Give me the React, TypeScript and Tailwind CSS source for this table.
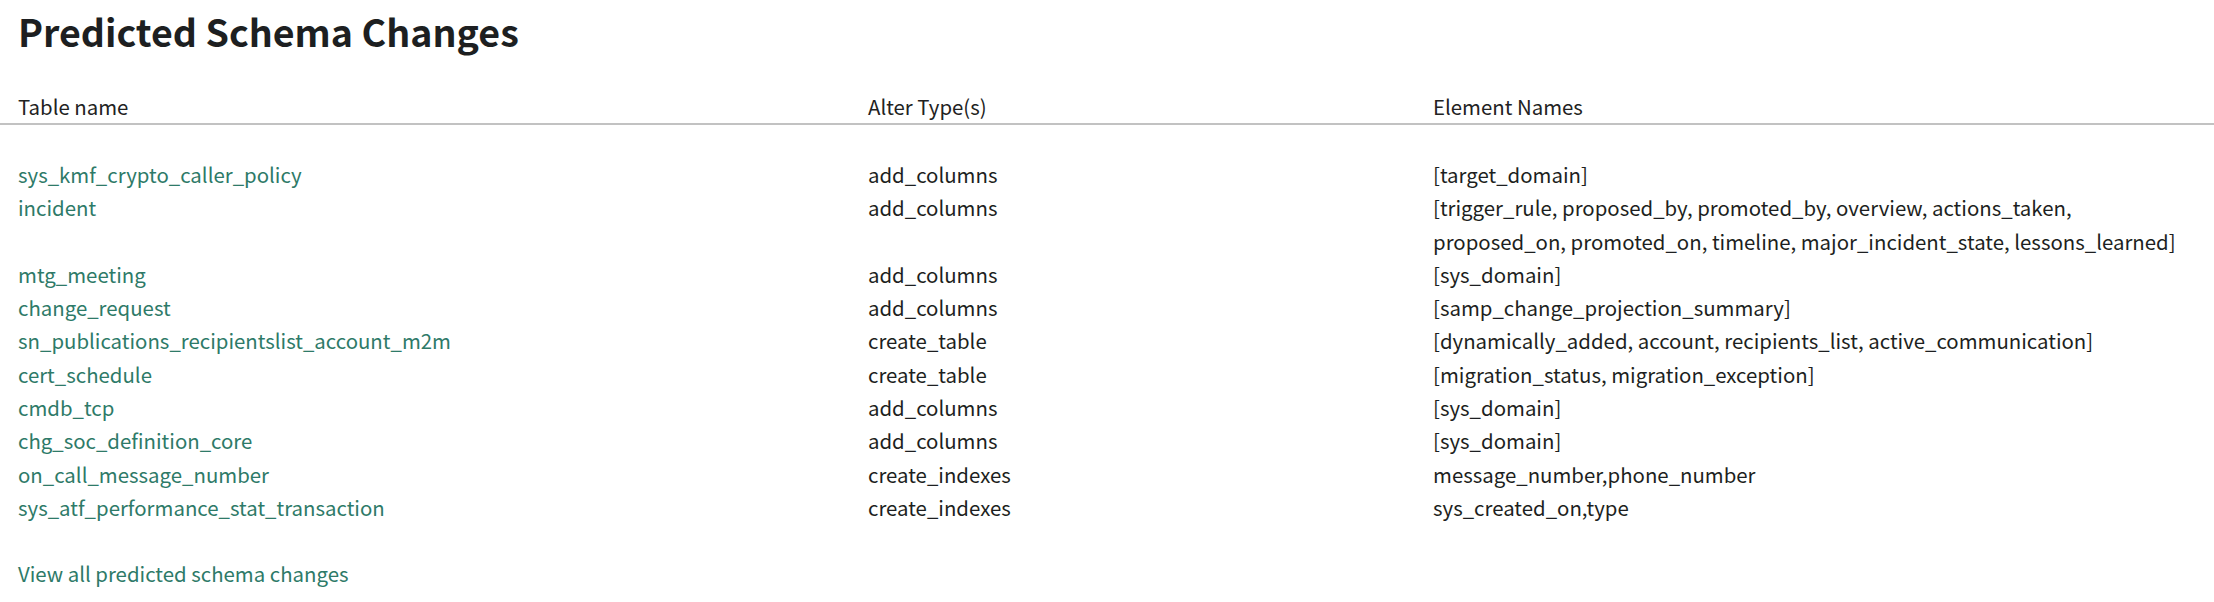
import React from 'react';

interface SchemaChange {
  table: string;
  alter: string;
  elements: string[];
}

const changes: SchemaChange[] = [
  { table: 'sys_kmf_crypto_caller_policy', alter: 'add_columns', elements: ['[target_domain]'] },
  {
    table: 'incident',
    alter: 'add_columns',
    elements: [
      '[trigger_rule, proposed_by, promoted_by, overview, actions_taken,',
      'proposed_on, promoted_on, timeline, major_incident_state, lessons_learned]',
    ],
  },
  { table: 'mtg_meeting', alter: 'add_columns', elements: ['[sys_domain]'] },
  { table: 'change_request', alter: 'add_columns', elements: ['[samp_change_projection_summary]'] },
  {
    table: 'sn_publications_recipientslist_account_m2m',
    alter: 'create_table',
    elements: ['[dynamically_added, account, recipients_list, active_communication]'],
  },
  { table: 'cert_schedule', alter: 'create_table', elements: ['[migration_status, migration_exception]'] },
  { table: 'cmdb_tcp', alter: 'add_columns', elements: ['[sys_domain]'] },
  { table: 'chg_soc_definition_core', alter: 'add_columns', elements: ['[sys_domain]'] },
  { table: 'on_call_message_number', alter: 'create_indexes', elements: ['message_number,phone_number'] },
  { table: 'sys_atf_performance_stat_transaction', alter: 'create_indexes', elements: ['sys_created_on,type'] },
];

const App: React.FC = () => {
  return (
    <div className="min-h-screen bg-white font-['Noto_Sans_CJK_SC','Lato',sans-serif] text-[#1d1f21]">
      {/* Titulo */}
      <h1 className="pl-[18px] pt-[3px] text-[37.6px] font-bold leading-[56px]">
        Predicted Schema Changes
      </h1>

      {/* Cabecera de la tabla */}
      <div className="mt-[31px] border-b-2 border-[#c2c2c2]">
        <div className="grid grid-cols-[850px_565px_1fr] pl-[18px] text-[20.4px] leading-[33px] text-[#222]">
          <div>Table name</div>
          <div>Alter Type(s)</div>
          <div>Element Names</div>
        </div>
      </div>

      {/* Filas */}
      <div className="pt-[33px] pl-[18px] text-[20.4px] leading-[33.3px]">
        {changes.map((c) => (
          <div key={c.table} className="grid grid-cols-[850px_565px_1fr]">
            <a href="#" className="text-[#2e7a68]">
              {c.table}
            </a>
            <div>{c.alter}</div>
            <div>
              {c.elements.map((e) => (
                <div key={e}>{e}</div>
              ))}
            </div>
          </div>
        ))}

        <a href="#" className="mt-[33px] block text-[#2e7a68]">
          View all predicted schema changes
        </a>
      </div>
    </div>
  );
};

export default App;
